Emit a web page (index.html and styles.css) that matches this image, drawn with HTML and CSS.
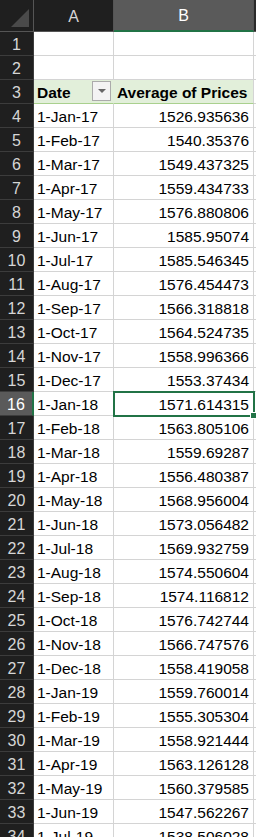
FILE: index.html
```html
<!DOCTYPE html>
<html>
<head>
<meta charset="utf-8">
<link rel="stylesheet" href="styles.css">
</head>
<body>
<div class="sheet">
  <div class="row hdr">
    <div class="rh corner"><span class="tri"></span></div>
    <div class="ch ca">A</div>
    <div class="ch cb sel">B</div>
    <div class="ch cc"></div>
  </div>
  <div class="row"><div class="rh">1</div><div class="c a"></div><div class="c b"></div><div class="c cc"></div></div>
  <div class="row"><div class="rh">2</div><div class="c a"></div><div class="c b"></div><div class="c cc"></div></div>
  <div class="row"><div class="rh">3</div><div class="c a pv">Date<span class="dd"><span class="ddtri"></span></span></div><div class="c b pv">Average of Prices</div><div class="c cc"></div></div>
  <div class="row"><div class="rh">4</div><div class="c a">1-Jan-17</div><div class="c b n">1526.935636</div><div class="c cc"></div></div>
  <div class="row"><div class="rh">5</div><div class="c a">1-Feb-17</div><div class="c b n">1540.35376</div><div class="c cc"></div></div>
  <div class="row"><div class="rh">6</div><div class="c a">1-Mar-17</div><div class="c b n">1549.437325</div><div class="c cc"></div></div>
  <div class="row"><div class="rh">7</div><div class="c a">1-Apr-17</div><div class="c b n">1559.434733</div><div class="c cc"></div></div>
  <div class="row"><div class="rh">8</div><div class="c a">1-May-17</div><div class="c b n">1576.880806</div><div class="c cc"></div></div>
  <div class="row"><div class="rh">9</div><div class="c a">1-Jun-17</div><div class="c b n">1585.95074</div><div class="c cc"></div></div>
  <div class="row"><div class="rh">10</div><div class="c a">1-Jul-17</div><div class="c b n">1585.546345</div><div class="c cc"></div></div>
  <div class="row"><div class="rh">11</div><div class="c a">1-Aug-17</div><div class="c b n">1576.454473</div><div class="c cc"></div></div>
  <div class="row"><div class="rh">12</div><div class="c a">1-Sep-17</div><div class="c b n">1566.318818</div><div class="c cc"></div></div>
  <div class="row"><div class="rh">13</div><div class="c a">1-Oct-17</div><div class="c b n">1564.524735</div><div class="c cc"></div></div>
  <div class="row"><div class="rh">14</div><div class="c a">1-Nov-17</div><div class="c b n">1558.996366</div><div class="c cc"></div></div>
  <div class="row"><div class="rh">15</div><div class="c a">1-Dec-17</div><div class="c b n">1553.37434</div><div class="c cc"></div></div>
  <div class="row"><div class="rh selrh">16</div><div class="c a">1-Jan-18</div><div class="c b n active">1571.614315<span class="fill"></span></div><div class="c cc"></div></div>
  <div class="row"><div class="rh">17</div><div class="c a">1-Feb-18</div><div class="c b n">1563.805106</div><div class="c cc"></div></div>
  <div class="row"><div class="rh">18</div><div class="c a">1-Mar-18</div><div class="c b n">1559.69287</div><div class="c cc"></div></div>
  <div class="row"><div class="rh">19</div><div class="c a">1-Apr-18</div><div class="c b n">1556.480387</div><div class="c cc"></div></div>
  <div class="row"><div class="rh">20</div><div class="c a">1-May-18</div><div class="c b n">1568.956004</div><div class="c cc"></div></div>
  <div class="row"><div class="rh">21</div><div class="c a">1-Jun-18</div><div class="c b n">1573.056482</div><div class="c cc"></div></div>
  <div class="row"><div class="rh">22</div><div class="c a">1-Jul-18</div><div class="c b n">1569.932759</div><div class="c cc"></div></div>
  <div class="row"><div class="rh">23</div><div class="c a">1-Aug-18</div><div class="c b n">1574.550604</div><div class="c cc"></div></div>
  <div class="row"><div class="rh">24</div><div class="c a">1-Sep-18</div><div class="c b n">1574.116812</div><div class="c cc"></div></div>
  <div class="row"><div class="rh">25</div><div class="c a">1-Oct-18</div><div class="c b n">1576.742744</div><div class="c cc"></div></div>
  <div class="row"><div class="rh">26</div><div class="c a">1-Nov-18</div><div class="c b n">1566.747576</div><div class="c cc"></div></div>
  <div class="row"><div class="rh">27</div><div class="c a">1-Dec-18</div><div class="c b n">1558.419058</div><div class="c cc"></div></div>
  <div class="row"><div class="rh">28</div><div class="c a">1-Jan-19</div><div class="c b n">1559.760014</div><div class="c cc"></div></div>
  <div class="row"><div class="rh">29</div><div class="c a">1-Feb-19</div><div class="c b n">1555.305304</div><div class="c cc"></div></div>
  <div class="row"><div class="rh">30</div><div class="c a">1-Mar-19</div><div class="c b n">1558.921444</div><div class="c cc"></div></div>
  <div class="row"><div class="rh">31</div><div class="c a">1-Apr-19</div><div class="c b n">1563.126128</div><div class="c cc"></div></div>
  <div class="row"><div class="rh">32</div><div class="c a">1-May-19</div><div class="c b n">1560.379585</div><div class="c cc"></div></div>
  <div class="row"><div class="rh">33</div><div class="c a">1-Jun-19</div><div class="c b n">1547.562267</div><div class="c cc"></div></div>
  <div class="row"><div class="rh">34</div><div class="c a">1-Jul-19</div><div class="c b n">1538.506028</div><div class="c cc"></div></div>
</div>
</body>
</html>
```
FILE: styles.css
```css
html, body {
  margin: 0;
  padding: 0;
  background: #ffffff;
  overflow: hidden;
}
.sheet {
  width: 256px;
  height: 837px;
  overflow: hidden;
  font-family: "Liberation Sans", Arial, sans-serif;
  font-size: 15.5px;
  color: #000;
}
.row {
  display: grid;
  grid-template-columns: 34px 80px 140px 2px;
  height: 24px;
}
.row.hdr {
  height: 32px;
  background: #1f1f1f;
}
.rh {
  box-sizing: border-box;
  background: #1f1f1f;
  color: #d6d6d6;
  border-right: 1px solid #3c3c3c;
  border-bottom: 1px solid #3c3c3c;
  display: flex;
  align-items: center;
  justify-content: center;
  padding-top: 2px;
  font-size: 16px;
}
.rh.corner {
  position: relative;
  border-right: 1px solid #555;
  border-bottom: 1px solid #555;
}
.tri {
  position: absolute;
  right: 4px;
  bottom: 4px;
  width: 0;
  height: 0;
  border-left: 18px solid transparent;
  border-bottom: 18px solid #4a4a4a;
}
.ch {
  box-sizing: border-box;
  color: #d6d6d6;
  background: #1f1f1f;
  border-right: 1px solid #555;
  border-bottom: 1px solid #555;
  display: flex;
  align-items: center;
  justify-content: center;
  font-size: 16px;
  padding-top: 2px;
}
.ch.sel {
  background: #5a5a5a;
  color: #ffffff;
  border-bottom: 2px solid #217346;
}
.ch.cc {
  background: #2a2a2a;
  border-right: none;
}
.selrh {
  background: #5a5a5a;
  color: #ffffff;
  border-right: 2px solid #217346;
}
.c {
  box-sizing: border-box;
  border-right: 1px solid #d4d4d4;
  border-bottom: 1px solid #d4d4d4;
  display: flex;
  align-items: center;
  padding: 2px 3px 0 3px;
  white-space: nowrap;
  overflow: hidden;
}
.c.cc {
  border-right: none;
}
.c.n {
  justify-content: flex-end;
  padding-right: 4px;
}
.c.pv {
  background: #e2efda;
  font-weight: bold;
  border-bottom: 1px solid #a9d08e;
  border-right-color: #e2efda;
  position: relative;
}
.c.b.pv {
  border-right-color: #d4d4d4;
  padding-left: 3px;
}
.dd {
  position: absolute;
  right: 2px;
  top: 1px;
  width: 19px;
  height: 20px;
  box-sizing: border-box;
  background: #f3f3f3;
  border: 1px solid #ababab;
  display: flex;
  align-items: center;
  justify-content: center;
}
.ddtri {
  width: 0;
  height: 0;
  border-left: 4px solid transparent;
  border-right: 4px solid transparent;
  border-top: 4px solid #666;
}
.active {
  position: relative;
  overflow: visible;
  outline: 2px solid #217346;
  outline-offset: -1px;
  z-index: 2;
}
.fill {
  position: absolute;
  right: -4px;
  bottom: -4px;
  width: 5px;
  height: 5px;
  background: #217346;
  border: 1px solid #ffffff;
}
```
